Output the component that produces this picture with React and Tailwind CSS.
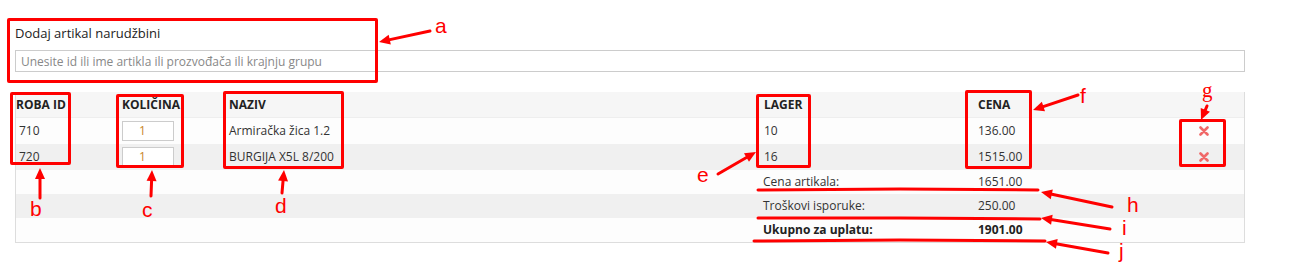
const rows = [
  { id: "710", qty: "1", name: "Armiračka žica 1.2", stock: "10", price: "136.00", bg: "bg-[#fdfdfd]" },
  { id: "720", qty: "1", name: "BURGIJA X5L 8/200", stock: "16", price: "1515.00", bg: "bg-[#f0f0f0]" },
];

const totals = [
  { label: "Cena artikala:", value: "1651.00", bg: "bg-[#fdfdfd]", bold: false },
  { label: "Troškovi isporuke:", value: "250.00", bg: "bg-[#f0f0f0]", bold: false },
  { label: "Ukupno za uplatu:", value: "1901.00", bg: "bg-[#fdfdfd]", bold: true },
];

const cols = "grid grid-cols-[106px_107px_535px_214px_221px_1fr]";

// red annotation arrows: tail -> head
const arrows = [
  [430, 31, 379, 42],
  [40, 198, 40, 168],
  [151, 196, 152, 170],
  [282, 193, 284, 170],
  [718, 174, 756, 152],
  [1078, 95, 1033, 110],
  [1207, 106, 1201, 120],
  [1112, 207, 1041, 192],
  [1110, 229, 1041, 218],
  [1108, 253, 1046, 242],
];

function Arrow({ x1, y1, x2, y2 }) {
  const dx = x2 - x1;
  const dy = y2 - y1;
  const len = Math.sqrt(dx * dx + dy * dy);
  const ux = dx / len;
  const uy = dy / len;
  const head = 11;
  const half = 5;
  const bx = x2 - ux * head;
  const by = y2 - uy * head;
  const pts = `${x2},${y2} ${bx - uy * half},${by + ux * half} ${bx + uy * half},${by - ux * half}`;
  return (
    <g>
      <line x1={x1} y1={y1} x2={bx + ux} y2={by + uy} stroke="#ff0000" strokeWidth="3" strokeLinecap="round" />
      <polygon points={pts} fill="#ff0000" />
    </g>
  );
}

function RemoveIcon() {
  return (
    <svg width="10" height="10" viewBox="0 0 10 10">
      <path d="M1.5 1.5 L8.5 8.5 M8.5 1.5 L1.5 8.5" stroke="#f06868" strokeWidth="2.6" strokeLinecap="round" />
    </svg>
  );
}

function App() {
  return (
    <div className="relative w-[1299px] h-[274px] bg-white overflow-hidden font-['Open_Sans',sans-serif] text-[12px] text-[#333]">
      <div className="ml-[15px] w-[1230px] pt-[24px]">
        <div className="text-[13px] leading-[18px] text-[#222] mb-[8px]">Dodaj artikal narudžbini</div>

        <input
          type="text"
          placeholder="Unesite id ili ime artikla ili prozvođača ili krajnju grupu"
          className="w-full h-[22px] border border-[#ccc] px-[5px] text-[12px] placeholder:text-[#888] outline-none"
        />

        <div className="mt-[20px] border-l border-r border-b border-[#ddd]">
          <div className={`${cols} h-[26px] items-center bg-[#f6f6f6] border-b border-[#eee] font-bold text-[#222]`}>
            <div>ROBA ID</div>
            <div>KOLIČINA</div>
            <div>NAZIV</div>
            <div>LAGER</div>
            <div>CENA</div>
            <div></div>
          </div>

          {rows.map((r) => (
            <div key={r.id} className={`${cols} h-[26px] items-center ${r.bg}`}>
              <div className="pl-[3px]">{r.id}</div>
              <div>
                <div className="w-[52px] h-[20px] border border-[#ccc] bg-white pl-[16px] leading-[18px] text-[#c8862a]">
                  {r.qty}
                </div>
              </div>
              <div>{r.name}</div>
              <div>{r.stock}</div>
              <div>{r.price}</div>
              <div className="flex items-center">
                <RemoveIcon />
              </div>
            </div>
          ))}

          {totals.map((t) => (
            <div key={t.label} className={`${cols} h-[24px] items-center ${t.bg} ${t.bold ? "font-bold text-[#222]" : ""}`}>
              <div></div>
              <div></div>
              <div></div>
              <div className="-ml-[1px]">{t.label}</div>
              <div>{t.value}</div>
              <div></div>
            </div>
          ))}
        </div>
      </div>

      {/* annotation boxes */}
      <div className="absolute left-[7px] top-[18px] w-[371px] h-[65px] border-[3px] border-[#ff0000] rounded-[2px]" />
      <div className="absolute left-[10px] top-[92px] w-[61px] h-[73px] border-[3px] border-[#ff0000] rounded-[2px]" />
      <div className="absolute left-[116px] top-[94px] w-[68px] h-[74px] border-[3px] border-[#ff0000] rounded-[2px]" />
      <div className="absolute left-[223px] top-[91px] w-[121px] h-[78px] border-[3px] border-[#ff0000] rounded-[2px]" />
      <div className="absolute left-[756px] top-[94px] w-[55px] h-[74px] border-[3px] border-[#ff0000] rounded-[2px]" />
      <div className="absolute left-[965px] top-[90px] w-[67px] h-[79px] border-[3px] border-[#ff0000] rounded-[2px]" />
      <div className="absolute left-[1179px] top-[119px] w-[47px] h-[48px] border-[3px] border-[#ff0000] rounded-[2px]" />

      <svg className="absolute inset-0 pointer-events-none" width="1299" height="274">
        <polyline points="758,190 900,189 1038,190" fill="none" stroke="#ff0000" strokeWidth="3" strokeLinecap="round" />
        <polyline points="758,218 900,218 1040,219" fill="none" stroke="#ff0000" strokeWidth="3" strokeLinecap="round" />
        <polyline points="754,241 900,240 1045,241" fill="none" stroke="#ff0000" strokeWidth="3" strokeLinecap="round" />
        {arrows.map((a, i) => (
          <Arrow key={i} x1={a[0]} y1={a[1]} x2={a[2]} y2={a[3]} />
        ))}
      </svg>

      {/* annotation letters */}
      <div className="absolute inset-0 pointer-events-none text-[#ff0000] text-[21px] leading-none font-['Liberation_Sans',sans-serif]">
        <span className="absolute left-[435px] top-[15px]">a</span>
        <span className="absolute left-[30px] top-[198px]">b</span>
        <span className="absolute left-[142px] top-[199px]">c</span>
        <span className="absolute left-[275px] top-[195px]">d</span>
        <span className="absolute left-[697px] top-[164px]">e</span>
        <span className="absolute left-[1080px] top-[85px]">f</span>
        <span className="absolute left-[1202px] top-[80px] font-['Liberation_Serif',serif]">g</span>
        <span className="absolute left-[1127px] top-[194px]">h</span>
        <span className="absolute left-[1122px] top-[217px]">i</span>
        <span className="absolute left-[1119px] top-[240px]">j</span>
      </div>
    </div>
  );
}

export default App;
